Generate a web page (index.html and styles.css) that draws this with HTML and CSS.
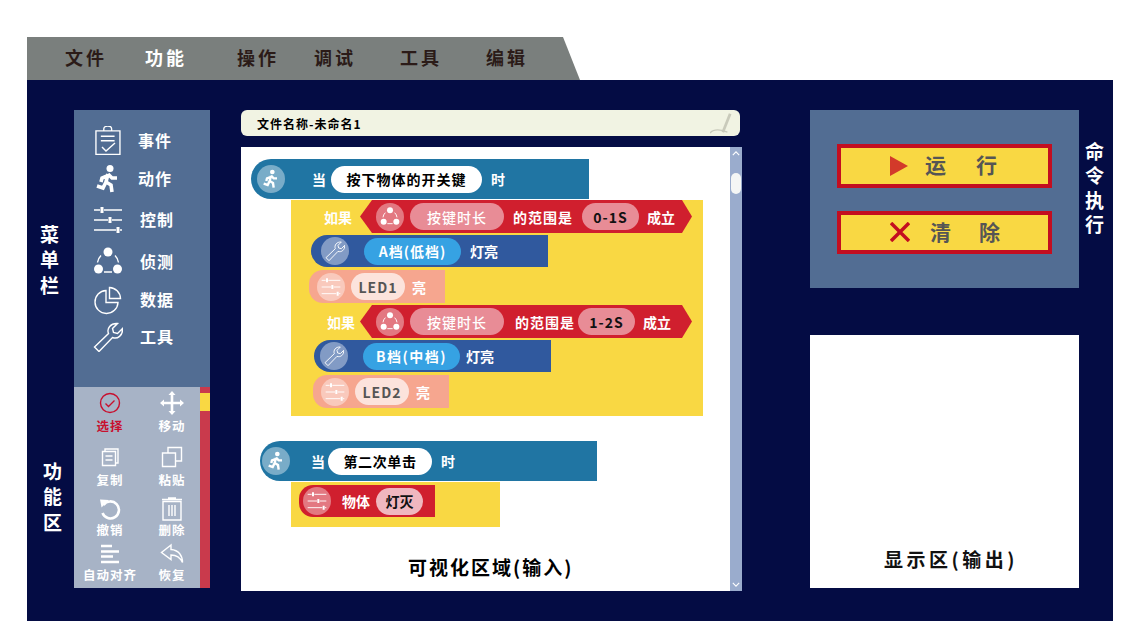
FILE: index.html
```html
<!DOCTYPE html>
<html>
<head>
    <meta charset="utf-8">
    <link rel="stylesheet" href="styles.css">
</head>
<body>
    <svg class="defs">
        <symbol id="i-clip" viewBox="0 0 30 30">
            <path d="M3 5.500h24.500v24h-24.500z M11 5.500v-2a4 3 0 0 1 8 0v2 M8 11h14 M8 15.500h14" transform="translate(0 -0.500) scale(.98)"/>
            <path d="M9 21l4 4 9-8"/>
        </symbol>
        <symbol id="i-run" viewBox="0 0 30 30">
            <circle class="solid" cx="17" cy="4.500" r="3.500"/>
            <path class="heavy" d="M15 10l-2 8 5 3 1 7 M14 12l-5 2-1 4 M15 10l4 4 5 0 M13 18l-3 6-6-2"/>
        </symbol>
        <symbol id="i-slide" viewBox="0 0 30 30">
            <path d="M1 5h6 M11 5h18 M1 15h14 M19 15h10 M1 25h22 M27 25h2"/>
            <path class="bar" d="M9 2v6 M17 12v6 M25 22v6"/>
        </symbol>
        <symbol id="i-dots" viewBox="0 0 30 30">
            <circle class="solid" cx="15" cy="5" r="4.500"/>
            <circle class="solid" cx="5.500" cy="22" r="4.500"/>
            <circle class="solid" cx="24.500" cy="22" r="4.500"/>
            <path d="M8 8.500a12 12 0 0 0-3.500 7 M22 8.500a12 12 0 0 1 3.500 7 M11 25h8"/>
        </symbol>
        <symbol id="i-pie" viewBox="0 0 30 30">
            <path d="M13 5.500a11.500 11.500 0 1 0 12 12h-12z M16.500 2.500a11.500 11.500 0 0 1 11 11h-11z"/>
        </symbol>
        <symbol id="i-wrench" viewBox="0 0 30 30">
            <path d="M1.500 25l14-13.500c-2-5 2-10.500 9-10l-5 5 1 4 4 1 5-5c.5 7-5 11-10 9l-13.500 14z"/>
        </symbol>
        <symbol id="i-check" viewBox="0 0 24 24">
            <circle cx="12" cy="12" r="9.500"/>
            <path d="M7.500 12.500l3 3 6-6"/>
        </symbol>
        <symbol id="i-move" viewBox="0 0 24 24">
            <path class="thick" d="M12 3v18 M3 12h18"/>
            <path class="solid" d="M12 0l3.500 4h-7z M12 24l3.500-4h-7z M0 12l4-3.500v7z M24 12l-4-3.500v7z"/>
        </symbol>
        <symbol id="i-copy" viewBox="0 0 24 24">
            <path d="M4.500 6.500h13v14h-13z M7 6.500v-2.500h13v14h-2.500 M7.500 11h7 M7.500 15h7"/>
        </symbol>
        <symbol id="i-paste" viewBox="0 0 24 24">
            <path d="M2.500 8h13v13.500h-13z M8 8v-5.500h13.500v13.500h-6"/>
        </symbol>
        <symbol id="i-undo" viewBox="0 0 24 24">
            <path class="thick" d="M5.500 8a8.500 8.500 0 1 1-1 8"/>
            <path class="solid" d="M2 2.500l9 .5-7.500 7.500z"/>
        </symbol>
        <symbol id="i-trash" viewBox="0 0 24 24">
            <path d="M3 4.500h18v18.500h-18z M2 2.500h20 M9 8v11 M12 8v11 M15 8v11 M8 1h8"/>
        </symbol>
        <symbol id="i-align" viewBox="0 0 24 24">
            <path class="thick" d="M3 4h11 M3 9.500h18 M3 14.500h12 M3 20h18"/>
        </symbol>
        <symbol id="i-reply" viewBox="0 0 24 24">
            <path d="M11 3l-9.500 7.500 9.500 7v-4.500c5 0 9 2 11.500 7.500 0-7-4-12.500-11.500-13z"/>
        </symbol>
    </svg>

    <nav class="tabs">
        <span>文件</span>
        <span class="tab-on">功能</span>
        <span>操作</span>
        <span>调试</span>
        <span>工具</span>
        <span>编辑</span>
    </nav>

    <main class="board">
        <div class="side">
            <div class="side-label side-label-menu">菜单栏</div>
            <div class="menu">
                <div class="menu-item"><svg class="ico"><use href="#i-clip"/></svg><span>事件</span></div>
                <div class="menu-item"><svg class="ico"><use href="#i-run"/></svg><span>动作</span></div>
                <div class="menu-item"><svg class="ico"><use href="#i-slide"/></svg><span>控制</span></div>
                <div class="menu-item"><svg class="ico"><use href="#i-dots"/></svg><span>侦测</span></div>
                <div class="menu-item"><svg class="ico"><use href="#i-pie"/></svg><span>数据</span></div>
                <div class="menu-item"><svg class="ico"><use href="#i-wrench"/></svg><span>工具</span></div>
            </div>
            <div class="side-label side-label-tools">功能区</div>
            <div class="tools">
                <div class="tool-grid">
                    <div class="tool tool-on"><svg class="tool-ico"><use href="#i-check"/></svg><span>选择</span></div>
                    <div class="tool"><svg class="tool-ico"><use href="#i-move"/></svg><span>移动</span></div>
                    <div class="tool"><svg class="tool-ico"><use href="#i-copy"/></svg><span>复制</span></div>
                    <div class="tool"><svg class="tool-ico"><use href="#i-paste"/></svg><span>粘贴</span></div>
                    <div class="tool"><svg class="tool-ico"><use href="#i-undo"/></svg><span>撤销</span></div>
                    <div class="tool"><svg class="tool-ico"><use href="#i-trash"/></svg><span>删除</span></div>
                    <div class="tool"><svg class="tool-ico"><use href="#i-align"/></svg><span>自动对齐</span></div>
                    <div class="tool"><svg class="tool-ico"><use href="#i-reply"/></svg><span>恢复</span></div>
                </div>
                <div class="strip"><div class="strip-thumb"></div></div>
            </div>
        </div>

        <div class="editor">
            <div class="file-bar">
                <span>文件名称-未命名1</span>
                <svg class="pencil" viewBox="0 0 24 24"><path class="pencil-body" d="M22 2L14 22"/><path d="M0 23c3-4 8-4 13-3l6 2"/></svg>
            </div>
            <div class="canvas">
                <div class="blocks">
                    <div class="hat hat-one">
                        <div class="chip"><svg><use href="#i-run"/></svg></div>
                        <span class="word word-when">当</span>
                        <span class="pill pill-white pill-key">按下物体的开关键</span>
                        <span class="word">时</span>
                    </div>
                    <div class="body body-one">
                        <div class="if-row">
                            <span class="if-word">如果</span>
                            <div class="if-block">
                                <div class="chip"><svg><use href="#i-dots"/></svg></div>
                                <span class="pill pill-pink pill-time">按键时长</span>
                                <span class="word word-range">的范围是</span>
                                <span class="pill pill-pink pill-range">0-1S</span>
                                <span class="word">成立</span>
                            </div>
                        </div>
                        <div class="act act-a">
                            <div class="chip"><svg><use href="#i-wrench"/></svg></div>
                            <span class="pill pill-blue">A档(低档)</span>
                            <span class="word">灯亮</span>
                        </div>
                        <div class="led led-a">
                            <div class="chip"><svg><use href="#i-slide"/></svg></div>
                            <span class="pill pill-led">LED1</span>
                            <span class="word">亮</span>
                        </div>
                        <div class="if-row if-row-two">
                            <span class="if-word">如果</span>
                            <div class="if-block">
                                <div class="chip"><svg><use href="#i-dots"/></svg></div>
                                <span class="pill pill-pink pill-time">按键时长</span>
                                <span class="word word-range">的范围是</span>
                                <span class="pill pill-pink pill-range">1-2S</span>
                                <span class="word">成立</span>
                            </div>
                        </div>
                        <div class="act act-b">
                            <div class="chip"><svg><use href="#i-wrench"/></svg></div>
                            <span class="pill pill-blue pill-wide">B档(中档)</span>
                            <span class="word">灯亮</span>
                        </div>
                        <div class="led led-b">
                            <div class="chip"><svg><use href="#i-slide"/></svg></div>
                            <span class="pill pill-led">LED2</span>
                            <span class="word">亮</span>
                        </div>
                    </div>

                    <div class="hat hat-two">
                        <div class="chip"><svg><use href="#i-run"/></svg></div>
                        <span class="word word-when">当</span>
                        <span class="pill pill-white pill-click">第二次单击</span>
                        <span class="word">时</span>
                    </div>
                    <div class="body body-two">
                        <div class="obj">
                            <div class="chip"><svg><use href="#i-slide"/></svg></div>
                            <span class="word">物体</span>
                            <span class="pill pill-off">灯灭</span>
                        </div>
                    </div>
                    <div class="canvas-title">可视化区域(输入)</div>
                </div>
                <div class="scroll">
                    <svg class="scroll-arrow" viewBox="0 0 10 6"><path d="M1 5l4-4 4 4"/></svg>
                    <div class="scroll-thumb"></div>
                    <svg class="scroll-arrow scroll-arrow-end" viewBox="0 0 10 6"><path d="M1 1l4 4 4-4"/></svg>
                </div>
            </div>
        </div>

        <div class="right">
            <div class="command">
                <div class="command-box">
                    <button class="cmd">
                        <svg class="cmd-ico" viewBox="0 0 20 20"><path class="play" d="M0 0l18 10-18 10z"/></svg>
                        <span>运</span><span>行</span>
                    </button>
                    <button class="cmd cmd-clear">
                        <svg class="cmd-ico" viewBox="0 0 20 20"><path class="cross" d="M1 1l18 18 M19 1L1 19"/></svg>
                        <span>清</span><span>除</span>
                    </button>
                </div>
                <div class="command-label">命令执行</div>
            </div>
            <div class="display">显示区(输出)</div>
        </div>
    </main>
</body>
</html>
```

FILE: styles.css
```css
body {
    margin: 0;
    background-color: #fff;
    font-family: "Noto Sans CJK SC", "Noto Sans", sans-serif;
    font-weight: 700;
    padding: 37px 34px 0 27px;
    height: 644px;
    box-sizing: border-box;
    overflow: hidden;
}
.defs {
    display: none;
}
svg {
    fill: none;
    stroke: currentColor;
    stroke-width: 1.4;
    display: block;
}
.solid {
    fill: currentColor;
    stroke: none;
}
.thick {
    stroke-width: 2.6;
}
.heavy {
    stroke-width: 3.6;
}
.bar {
    stroke-width: 3;
}

/* top tabs */
.tabs {
    width: 553px;
    height: 43px;
    box-sizing: border-box;
    background-color: #7a7f7d;
    clip-path: polygon(0 0, 536px 0, 553px 100%, 0 100%);
    padding: 0 0 3px 38px;
    display: grid;
    grid-template-columns: 80px 92px 77px 86px 86px 60px;
    align-items: center;
    font-size: 18px;
    letter-spacing: 3px;
    color: #2b1b18;
}
.tab-on {
    color: #fff;
}

/* main board */
.board {
    width: 1086px;
    height: 541px;
    box-sizing: border-box;
    background-color: #040c44;
    padding-top: 30px;
    display: flex;
}
.side {
    display: grid;
    grid-template-columns: 47px 136px;
    grid-template-rows: 277px 201px;
    height: 478px;
}
.side-label {
    writing-mode: vertical-rl;
    text-orientation: upright;
    font-size: 19px;
    letter-spacing: 6.500px;
    color: #fff;
}
.side-label-menu {
    padding-top: 115px;
    line-height: 50px;
}
.side-label-tools {
    padding-top: 75px;
    line-height: 44px;
}
.menu {
    background-color: #526d93;
    padding-top: 12px;
    box-sizing: border-box;
    display: grid;
    grid-template-rows: 38px 38px 44px 40px 36px 38px;
    align-content: start;
    color: #fff;
}
.menu-item {
    display: flex;
    align-items: center;
    padding-left: 19px;
    gap: 15px;
    font-size: 16px;
    letter-spacing: 1px;
}
.menu-item span {
    padding-bottom: 3px;
}
.menu-item:nth-child(n+3) span {
    padding-left: 2px;
}
.ico {
    width: 30px;
    height: 30px;
}
.tools {
    background-color: #a7b3c6;
    display: flex;
    color: #fff;
}
.tool-grid {
    width: 126px;
    box-sizing: border-box;
    padding: 4px 0 0 6px;
    display: grid;
    grid-template-columns: 60px 64px;
    grid-template-rows: 54px 52px 45px 44px;
}
.tool {
    display: flex;
    flex-direction: column;
    align-items: center;
    font-size: 12.500px;
    letter-spacing: 1px;
    line-height: 22px;
    white-space: nowrap;
}
.tool:nth-child(n+5) span {
    margin-top: -2px;
}
.tool-on {
    color: #c8102e;
}
.tool-ico {
    width: 24px;
    height: 24px;
    flex: none;
}
.strip {
    width: 10px;
    background-color: #c93a4c;
    padding-top: 6px;
}
.strip-thumb {
    height: 18px;
    background-color: #f9d843;
}

/* editor */
.editor {
    width: 501px;
    margin-left: 31px;
    display: flex;
    flex-direction: column;
    gap: 11px;
}
.file-bar {
    width: 499px;
    height: 26px;
    box-sizing: border-box;
    background-color: #f1f3e3;
    border-radius: 6px;
    padding: 0 8px 0 16px;
    display: flex;
    align-items: center;
    justify-content: space-between;
    font-size: 12px;
    letter-spacing: 1px;
    color: #000;
}
.pencil {
    width: 22px;
    height: 22px;
    color: #c9cabb;
}
.pencil-body {
    stroke-width: 3;
}
.canvas {
    height: 444px;
    background-color: #fff;
    display: flex;
}
.blocks {
    width: 489px;
    box-sizing: border-box;
    padding: 12px 0 0 10px;
    color: #fff;
    font-size: 14px;
}
.chip {
    width: 28px;
    height: 28px;
    flex: none;
    border-radius: 50%;
    background-color: rgba(255, 255, 255, .4);
    display: flex;
    align-items: center;
    justify-content: center;
    color: #fff;
}
.chip svg {
    width: 20px;
    height: 20px;
}
.word {
    white-space: nowrap;
}
.word-range {
    letter-spacing: 1px;
}
.pill {
    flex: none;
    height: 27px;
    border-radius: 14px;
    display: flex;
    align-items: center;
    justify-content: center;
    white-space: nowrap;
}
.pill-white {
    background-color: #fff;
    color: #000;
}
.pill-pink {
    background-color: #e88c96;
    letter-spacing: 1px;
}
.pill-blue {
    background-color: #36a2e3;
    width: 97px;
    letter-spacing: 1px;
}
.pill-wide {
    letter-spacing: 1.500px;
}
.pill-led {
    background-color: #fce3dc;
    color: #555;
    width: 54px;
    letter-spacing: 1px;
}
.pill-off {
    background-color: #f0b7bf;
    color: #111;
    width: 47px;
}
.pill-time {
    width: 94px;
    font-weight: 500;
}
.pill-range {
    width: 57px;
    color: #111;
}
.pill-key {
    width: 151px;
    letter-spacing: 1px;
}
.pill-click {
    width: 104px;
    letter-spacing: .6px;
}

.hat {
    height: 40px;
    border-radius: 20px 0 0 20px;
    background-color: #2075a3;
    display: flex;
    align-items: center;
    padding-left: 6px;
    box-sizing: border-box;
}
.hat-one {
    width: 338px;
}
.hat-two {
    width: 337px;
    margin: 25px 0 0 9px;
    padding-left: 2px;
}
.word-when {
    margin: 0 5px 0 27px;
}
.hat-two .word-when {
    margin: 0 3px 0 21px;
}
.hat .pill + .word {
    margin-left: 9px;
}
.body {
    background-color: #f9d843;
    margin: 1px 0 0 40px;
}
.body-one {
    width: 412px;
    height: 216px;
}
.body-two {
    width: 209px;
    height: 45px;
    padding-top: 3px;
    box-sizing: border-box;
}
.if-row {
    display: flex;
    align-items: center;
    padding-left: 33px;
    gap: 8px;
}
.if-row-two {
    margin-top: 2px;
    padding-left: 36px;
    gap: 5px;
}
.if-word {
    width: 28px;
    white-space: nowrap;
}
.if-block {
    width: 332px;
    height: 33px;
    box-sizing: border-box;
    background-color: #d01f2e;
    clip-path: polygon(12px 0, 322px 0, 332px 50%, 322px 100%, 12px 100%, 0 50%);
    padding-left: 16px;
    display: flex;
    align-items: center;
}
.if-block .pill-time {
    margin: 0 9px 0 6px;
}
.if-block .pill-range {
    margin: 0 8px 0 9px;
}
.if-row-two .pill-time {
    margin-right: 11px;
}
.if-row-two .pill-range {
    margin-left: 3px;
}
.act {
    height: 32px;
    background-color: #30599e;
    border-radius: 16px 0 0 16px;
    width: 237px;
    box-sizing: border-box;
    padding-left: 10px;
    display: flex;
    align-items: center;
    margin-top: 2px;
}
.act .pill {
    margin: 0 9px 0 15px;
}
.act-a {
    margin-left: 20px;
}
.act-b {
    margin-left: 23px;
    padding-left: 6px;
}
.act-b .pill {
    margin-right: 6px;
}
.led {
    height: 33px;
    width: 136px;
    background-color: #f6a68f;
    border-radius: 14px 0 0 14px;
    box-sizing: border-box;
    padding-left: 8px;
    display: flex;
    align-items: center;
    margin-top: 3px;
}
.led .pill {
    margin: 0 7px 0 6px;
}
.led-a {
    margin-left: 18px;
}
.led-b {
    margin-left: 22px;
}
.obj {
    width: 136px;
    height: 32px;
    background-color: #d01f2e;
    border-radius: 14px 0 0 14px;
    box-sizing: border-box;
    padding-left: 4px;
    margin-left: 8px;
    display: flex;
    align-items: center;
}
.obj .word {
    margin: 0 6px 0 11px;
}
.canvas-title {
    margin: 26px 0 0 157px;
    color: #000;
    font-size: 19px;
    letter-spacing: 2px;
    white-space: nowrap;
}
.scroll {
    width: 12px;
    background-color: #9aaccd;
    box-sizing: border-box;
    padding: 4px 1px;
    display: flex;
    flex-direction: column;
    align-items: center;
}
.scroll-arrow {
    width: 8px;
    height: 5px;
    color: #fff;
}
.scroll-arrow-end {
    margin-top: auto;
}
.scroll-thumb {
    width: 10px;
    height: 21px;
    margin-top: 17px;
    border-radius: 5px;
    background-color: #f4f6f5;
}

/* right side */
.right {
    margin-left: 68px;
    display: flex;
    flex-direction: column;
    gap: 47px;
}
.command {
    display: flex;
}
.command-box {
    width: 269px;
    height: 178px;
    box-sizing: border-box;
    background-color: #526d93;
    padding: 34px 0 0 27px;
    display: flex;
    flex-direction: column;
    gap: 23px;
}
.cmd {
    width: 215px;
    height: 43.500px;
    box-sizing: border-box;
    border: 4px solid #c30e20;
    background-color: #f9d843;
    color: #555;
    font: inherit;
    font-size: 21px;
    padding: 0 0 3px 49px;
    display: flex;
    align-items: center;
    gap: 30px;
}
.cmd-ico {
    width: 20px;
    height: 20px;
    margin: 3px -15px 0 0;
}
.cmd-clear {
    gap: 28px;
}
.cmd-clear .cmd-ico {
    margin-right: -8px;
}
.play {
    fill: #d33a2a;
    stroke: none;
}
.cross {
    stroke: #c30e20;
    stroke-width: 3.500;
}
.command-label {
    writing-mode: vertical-rl;
    text-orientation: upright;
    font-size: 19px;
    letter-spacing: 5.500px;
    line-height: 20px;
    color: #fff;
    margin: 32px 0 0 5px;
}
.display {
    width: 269px;
    height: 253px;
    box-sizing: border-box;
    background-color: #fff;
    color: #111;
    font-size: 19px;
    letter-spacing: 3.500px;
    text-align: center;
    padding: 210px 0 0 13px;
}
```
